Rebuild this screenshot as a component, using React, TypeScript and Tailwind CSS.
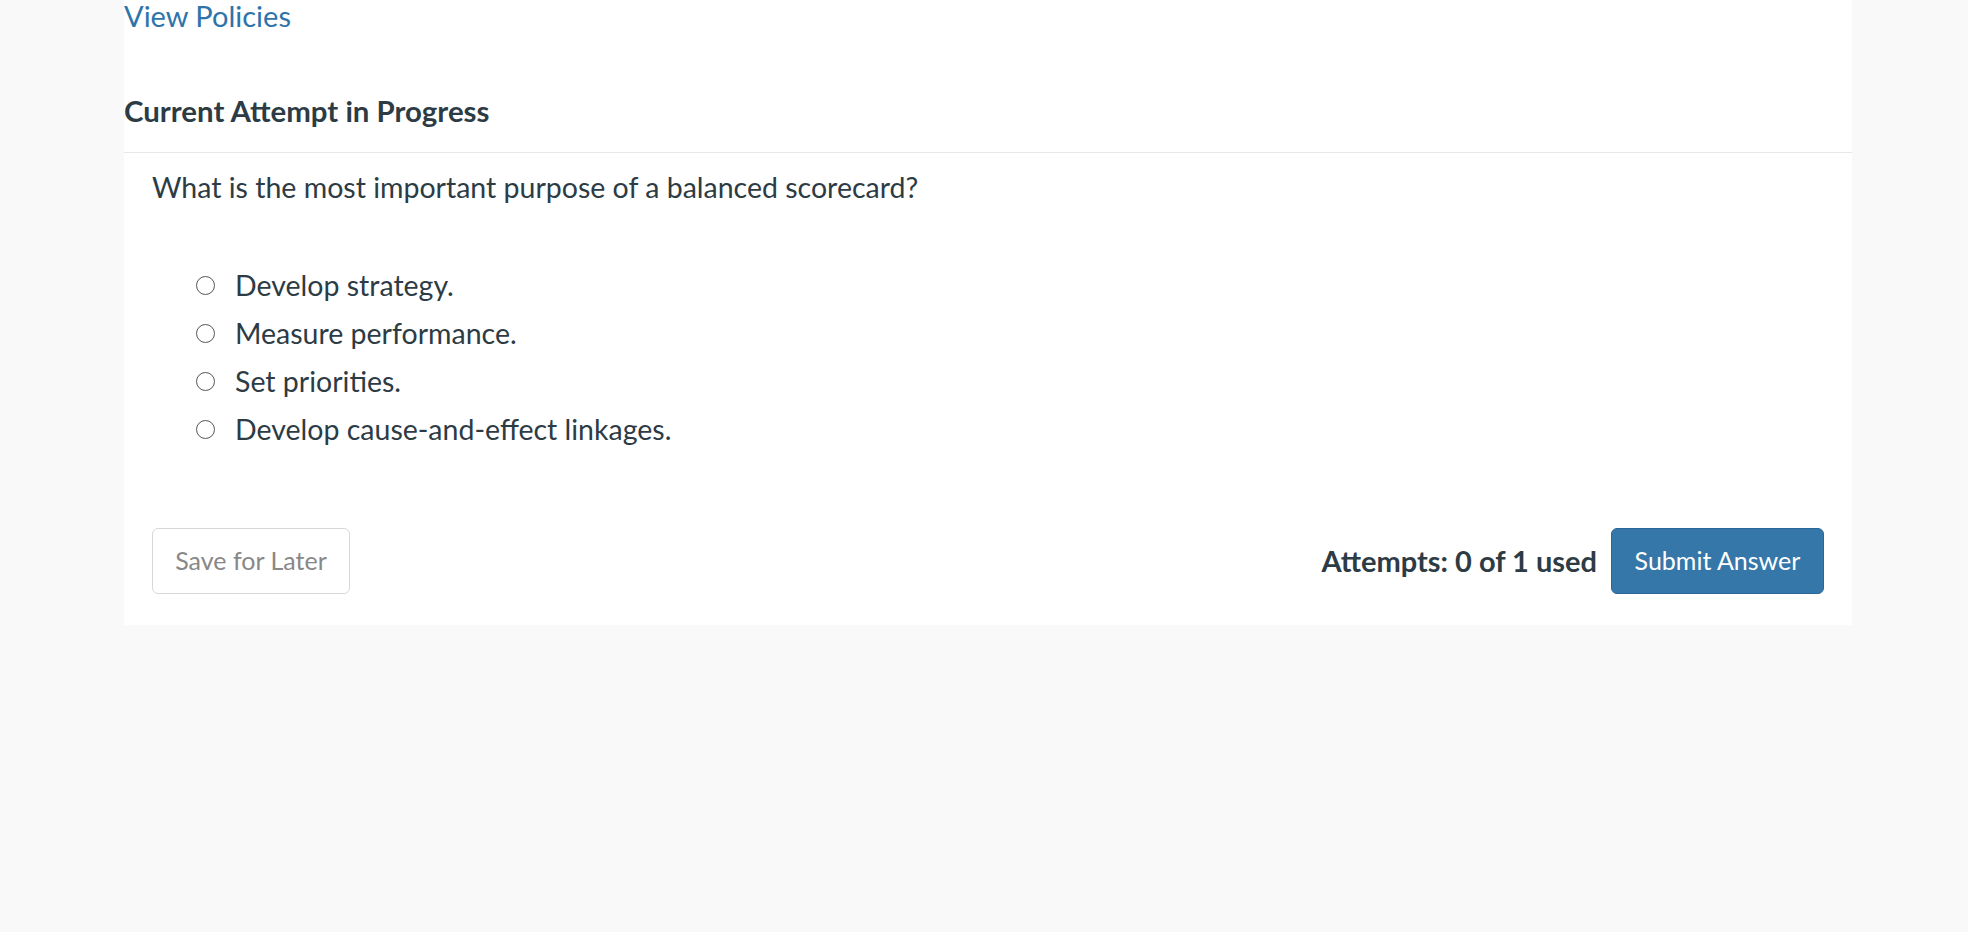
import React from "react";

const options = [
  "Develop strategy.",
  "Measure performance.",
  "Set priorities.",
  "Develop cause-and-effect linkages.",
];

export default function App() {
  return (
    <div
      className="min-h-[932px] w-full bg-[#f9f9f9] text-[#2d3b45]"
      style={{ fontFamily: "Lato, 'Open Sans', sans-serif" }}
    >
      <div className="ml-[124px] w-[1728px] bg-white pb-[31px]">
        <div className="h-[32px] text-[29px] leading-[32px] text-[#2e74aa]">
          View Policies
        </div>
        <div className="mt-[61px] h-[36px] text-[29.4px] font-bold leading-[36px]">
          Current Attempt in Progress
        </div>
        <div className="mt-[23px] h-px bg-[#e8e8e8]" />
        <div className="px-[28px]">
          <div className="mt-[16px] h-[36px] text-[28.5px] leading-[36px]">
            What is the most important purpose of a balanced scorecard?
          </div>
          <div className="mt-[56px] flex flex-col pl-[44px]">
            {options.map((o) => (
              <div key={o} className="flex h-[48px] items-center">
                <span className="mr-[20px] box-border h-[19px] w-[19px] shrink-0 rounded-full border-[1.5px] border-[#555555] bg-white" />
                <span className="text-[28.5px] leading-[48px]">{o}</span>
              </div>
            ))}
          </div>
          <div className="mt-[75px] flex items-center justify-between">
            <button className="box-border h-[66px] w-[198px] rounded-[6px] border border-[#d8d8d8] bg-white text-[25px] text-[#888888]">
              Save for Later
            </button>
            <div className="flex items-center">
              <span className="mr-[14px] text-[29px] font-bold">
                Attempts: 0 of 1 used
              </span>
              <button className="box-border h-[66px] w-[213px] rounded-[6px] border border-[#2b6796] bg-[#3577a9] text-[25px] text-white">
                Submit Answer
              </button>
            </div>
          </div>
        </div>
      </div>
    </div>
  );
}
